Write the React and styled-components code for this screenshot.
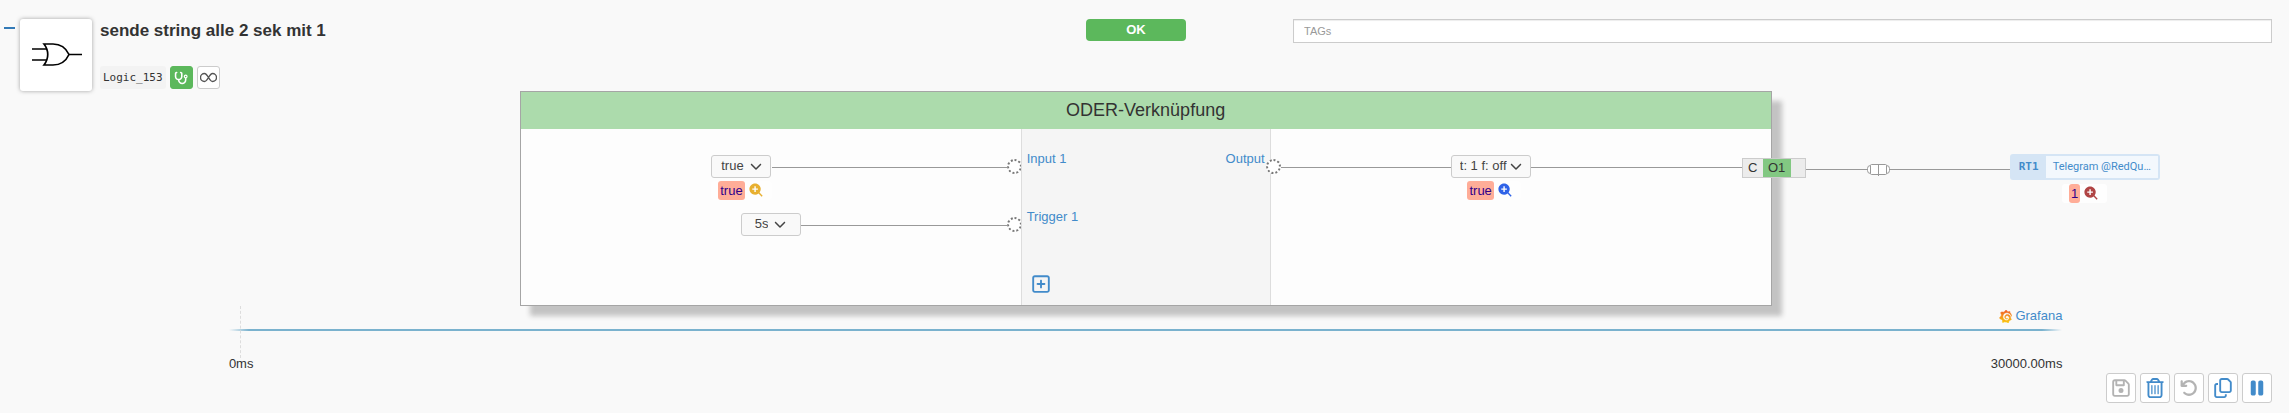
import styled, { createGlobalStyle } from 'styled-components'
import {
  FaStethoscope,
  FaChevronDown,
  FaRegSquarePlus,
  FaRegFloppyDisk,
  FaRegTrashCan,
  FaArrowRotateLeft,
  FaRegCopy,
  FaPause,
} from 'react-icons/fa6'
import { BiSolidZoomIn } from 'react-icons/bi'
import { SiGrafana } from 'react-icons/si'

const GlobalStyle = createGlobalStyle`
  * {
    box-sizing: border-box;
  }
  body {
    margin: 0;
    background: #f9f9f9;
    color: #333;
    font-family: "Liberation Sans", Arial, sans-serif;
    font-size: 13px;
    line-height: 18px;
  }
  button, input, select {
    font: inherit;
    color: inherit;
    margin: 0;
    padding: 0;
  }
  svg {
    display: block;
  }
`

const Page = styled.main`
  padding: 19px 0 10px;
  overflow: hidden;
`

// ---- header ----

const Header = styled.header`
  display: grid;
  grid-template-columns: 1fr 100px 1fr;
  column-gap: 107px;
  align-items: start;
  padding-right: 17px;
`

const Identity = styled.div`
  display: flex;
  align-items: flex-start;
  padding-left: 4px;
`

const Collapse = styled.button`
  width: 11px;
  height: 18px;
  margin-right: 5px;
  border: 0;
  background: none;

  &::before {
    content: '';
    display: block;
    height: 2px;
    background: #337ab7;
  }
`

const GateBox = styled.div`
  width: 72px;
  height: 72px;
  margin-right: 8px;
  background: #fff;
  border-radius: 3px;
  box-shadow: 0 0 4px rgba(0, 0, 0, 0.35);
`

const Heading = styled.div`
  display: flex;
  flex-direction: column;
  justify-content: space-between;
  height: 70px;
`

const Title = styled.h1`
  margin: 0;
  font-size: 17px;
  line-height: 23px;
  font-weight: bold;
`

const Meta = styled.div`
  display: flex;
  gap: 4px;
`

const LogicId = styled.code`
  padding: 0 3px;
  border-radius: 3px;
  background: #f3f3f3;
  font-family: "DejaVu Sans Mono", monospace;
  font-size: 11px;
  line-height: 23px;
`

const SmallButton = styled.button`
  display: flex;
  align-items: center;
  justify-content: center;
  width: 23px;
  height: 23px;
  border: 1px solid ${({ $active }) => ($active ? '#5cb85c' : '#ccc')};
  border-radius: 3px;
  background: ${({ $active }) => ($active ? '#5cb85c' : '#fff')};
  color: ${({ $active }) => ($active ? '#fff' : '#555')};
`

const OkButton = styled.button`
  height: 22px;
  border: 0;
  border-radius: 4px;
  background: #5cb85c;
  color: #fff;
  font-weight: bold;
`

const TagInput = styled.input`
  width: 100%;
  height: 24px;
  padding: 0 10px;
  border: 1px solid #ccc;
  background: #fff;
  box-shadow: inset 0 1px 1px rgba(0, 0, 0, 0.075);
  font-size: 11px;

  &::placeholder {
    color: #999;
    opacity: 1;
  }
`

// ---- logic block ----

const Workspace = styled.section`
  display: grid;
  grid-template-columns: 22.7% 54.7% 1fr;
`

const Card = styled.div`
  grid-column: 2;
  border: 1px solid #a5a5a5;
  background: #fdfdfd;
  box-shadow: 10px 10px 5px #c3c3c3;
`

const CardTitle = styled.h2`
  margin: 0;
  padding: 0 12px;
  background: #acdbac;
  font-size: 18px;
  font-weight: normal;
  line-height: 37px;
  text-align: center;
`

const CardBody = styled.div`
  display: grid;
  grid-template-columns: 2fr 1fr 2fr;
  min-height: 176px;
`

const Inputs = styled.div`
  display: flex;
  flex-direction: column;
  gap: 13px;
  padding-top: 26px;
`

const Outputs = styled.div`
  padding-top: 26px;
`

const Line = styled.div`
  display: flex;
  align-items: flex-start;
  justify-content: flex-end;
  margin-right: -1px;
`

const OutputLine = styled(Line)`
  justify-content: flex-start;
  margin: 0 -35px 0 -5px;
`

const Wire = styled.div`
  flex: ${({ $length }) => ($length ? `0 1 ${$length}px` : '1')};
  height: 1px;
  margin-top: ${({ $outer }) => ($outer ? '15px' : '12px')};
  background: #999;
`

const Port = styled.div`
  flex: none;
  width: 15px;
  height: 15px;
  margin-top: 4px;
  border: 2px dotted #777;
  border-radius: 50%;
  background: #fff;
`

const Node = styled.div`
  display: flex;
  flex-direction: column;
  align-items: center;
  gap: 3px;
`

const Dropdown = styled.label`
  display: flex;
  align-items: center;
  justify-content: center;
  gap: ${({ $wide }) => ($wide ? '3px' : '6px')};
  width: ${({ $wide }) => ($wide ? '80px' : '60px')};
  height: 23px;
  padding-bottom: 1px;
  border: 1px solid #ccc;
  border-radius: 3px;
  background: #f9f9f9;
  color: #444;
`

const Select = styled.select`
  appearance: none;
  field-sizing: content;
  border: 0;
  background: none;
`

const Value = styled.div`
  display: flex;
  align-items: center;
  justify-content: center;
  gap: 3px;
  height: 19px;
  padding: 0 7px;
  border-radius: 3px;
  background: #fefefe;
  color: ${({ $color }) => $color};
`

const ValueText = styled.span`
  padding: 0 2px;
  border-radius: 3px;
  background: #ffad98;
  color: #30008a;
  line-height: 19px;
`

const Names = styled.div`
  display: flex;
  justify-content: space-between;
  padding: 21px 5px 11px;
  border: solid #ddd;
  border-width: 0 1px;
  background: #f5f5f5;
`

const NameList = styled.div`
  display: flex;
  flex-direction: column;
  align-items: flex-start;
  gap: 40px;
`

const PortLink = styled.a`
  color: #428bca;
  text-decoration: none;
`

const AddButton = styled.button`
  margin: auto 0 0 4px;
  border: 0;
  background: none;
  color: #428bca;
`

const Connector = styled.div`
  display: flex;
  width: 64px;
  height: 20px;
  margin-top: 3px;
  border: 1px solid #ccc;
  background: #ececec;
  z-index: 1;
`

const ConnectorCell = styled.span`
  width: ${({ $on }) => ($on ? '28px' : '20px')};
  background: ${({ $on }) => ($on ? '#82c882' : 'transparent')};
  text-align: center;
`

const Target = styled.div`
  display: flex;
  align-items: flex-start;
  padding: 63px 0 0 34px;
`

const Coupler = styled.svg`
  flex: none;
  margin-top: 10px;
`

const TargetNode = styled(Node)`
  gap: 4px;
`

const Chip = styled.a`
  display: flex;
  width: 150px;
  height: 26px;
  padding: 2px;
  border-radius: 3px;
  background: #d5e5f5;
  color: #428bca;
  font-family: Roboto, sans-serif;
  font-size: 11px;
  line-height: 22px;
  text-decoration: none;
`

const ChipId = styled.strong`
  width: 34px;
  font-family: "DejaVu Sans Mono", monospace;
  text-align: center;
`

const ChipName = styled.span`
  flex: 1;
  padding-left: 7px;
  background: #f3f8fd;
  white-space: nowrap;
`

// ---- timeline ----

const Timeline = styled.section`
  position: relative;
  margin: 0 9.9% 0 10%;

  &::before {
    content: '';
    position: absolute;
    left: 11px;
    height: 52px;
    border-left: 1px dashed #ddd;
  }
`

const GrafanaLink = styled.a`
  display: flex;
  align-items: center;
  justify-content: flex-end;
  gap: 3px;
  height: 23px;
  padding-bottom: 3px;
  color: #428bca;
  text-decoration: none;
`

const GradientDefs = styled.svg`
  position: absolute;
`

const Track = styled.div`
  height: 2px;
  background: linear-gradient(to right, transparent, #7ab2ce 20px, #7ab2ce calc(100% - 20px), transparent);
`

const Ticks = styled.div`
  display: flex;
  justify-content: space-between;
  margin-top: 24px;
`

const Actions = styled.footer`
  display: flex;
  justify-content: flex-end;
  gap: 4px;
  padding-right: 17px;
`

const ActionButton = styled.button`
  display: flex;
  align-items: center;
  justify-content: center;
  width: 30px;
  height: 30px;
  border: 1px solid #ccc;
  border-radius: 3px;
  background: #fff;
  color: #428bca;

  &:disabled {
    color: #b3b3b3;
  }
`

function OrGate() {
  return (
    <svg width="72" height="72" viewBox="0 0 72 72" fill="none" stroke="#000" strokeWidth="1.7">
      <path d="M12 30h15M12 41h15M49 35.5h13" />
      <path d="M24 25h9c7 0 13 4 16 10.5c-3 6.5-9 10.5-16 10.5h-9c5-6.5 5-14.5 0-21z" />
    </svg>
  )
}

function InfinityIcon() {
  return (
    <svg width="17" height="11" viewBox="0 0 17 11" fill="none" stroke="currentColor" strokeWidth="1.4">
      <path d="M8.5 5.5C7 3 6 1.5 4.5 1.5a4 4 0 0 0 0 8C6 9.5 7 8 8.5 5.5S11 1.5 12.5 1.5a4 4 0 0 1 0 8C11 9.5 10 8 8.5 5.5z" />
    </svg>
  )
}

function Picker({ label, value, wide }) {
  return (
    <Dropdown $wide={wide}>
      <Select aria-label={label} defaultValue={value}>
        <option>{value}</option>
      </Select>
      <FaChevronDown size={12} />
    </Dropdown>
  )
}

function LiveValue({ value, color }) {
  return (
    <Value $color={color}>
      <ValueText>{value}</ValueText>
      <BiSolidZoomIn size={17} />
    </Value>
  )
}

export default function App() {
  return (
    <Page>
      <GlobalStyle />
      <Header>
        <Identity>
          <Collapse aria-label="Einklappen" />
          <GateBox>
            <OrGate />
          </GateBox>
          <Heading>
            <Title>sende string alle 2 sek mit 1</Title>
            <Meta>
              <LogicId>Logic_153</LogicId>
              <SmallButton $active aria-label="Diagnose">
                <FaStethoscope size={14} />
              </SmallButton>
              <SmallButton aria-label="Endlos">
                <InfinityIcon />
              </SmallButton>
            </Meta>
          </Heading>
        </Identity>
        <OkButton>OK</OkButton>
        <TagInput placeholder="TAGs" aria-label="TAGs" />
      </Header>

      <Workspace>
        <Card>
          <CardTitle>ODER-Verknüpfung</CardTitle>
          <CardBody>
            <Inputs>
              <Line>
                <Node>
                  <Picker label="Input 1" value="true" />
                  <LiveValue value="true" color="#e8b030" />
                </Node>
                <Wire $length={235} />
                <Port />
              </Line>
              <Line>
                <Node>
                  <Picker label="Trigger 1" value="5s" />
                </Node>
                <Wire $length={206} />
                <Port />
              </Line>
            </Inputs>
            <Names>
              <NameList>
                <PortLink href="#input">Input 1</PortLink>
                <PortLink href="#trigger">Trigger 1</PortLink>
                <AddButton aria-label="Hinzufügen">
                  <FaRegSquarePlus size={20} />
                </AddButton>
              </NameList>
              <NameList>
                <PortLink href="#output">Output</PortLink>
              </NameList>
            </Names>
            <Outputs>
              <OutputLine>
                <Port />
                <Wire $length={170} />
                <Node>
                  <Picker label="Output" value="t: 1 f: off" wide />
                  <LiveValue value="true" color="#2f63e8" />
                </Node>
                <Wire />
                <Connector>
                  <ConnectorCell>C</ConnectorCell>
                  <ConnectorCell $on>O1</ConnectorCell>
                </Connector>
              </OutputLine>
            </Outputs>
          </CardBody>
        </Card>
        <Target>
          <Wire $outer $length={61} />
          <Coupler width="23" height="12" viewBox="0 0 23 12" fill="#fff" stroke="#999">
            <rect x="0.5" y="1.5" width="22" height="8" rx="3" />
            <rect x="3.5" y="0.5" width="16" height="10" rx="1" />
            <path d="M11.5 0v12" />
          </Coupler>
          <Wire $outer $length={120} />
          <TargetNode>
            <Chip href="#rt1">
              <ChipId>RT1</ChipId>
              <ChipName>Telegram @RedQu…</ChipName>
            </Chip>
            <LiveValue value="1" color="#b04444" />
          </TargetNode>
        </Target>
      </Workspace>

      <Timeline>
        <GradientDefs width="0" height="0">
          <linearGradient id="grafana" x1="0" y1="0" x2="0" y2="1">
            <stop offset="0" stopColor="#f05a28" />
            <stop offset="1" stopColor="#fbca0a" />
          </linearGradient>
        </GradientDefs>
        <GrafanaLink href="#grafana">
          <SiGrafana size={13} fill="url(#grafana)" stroke="url(#grafana)" strokeWidth="1" />
          Grafana
        </GrafanaLink>
        <Track />
        <Ticks>
          <span>0ms</span>
          <span>30000.00ms</span>
        </Ticks>
      </Timeline>

      <Actions>
        <ActionButton disabled aria-label="Speichern">
          <FaRegFloppyDisk size={20} />
        </ActionButton>
        <ActionButton aria-label="Löschen">
          <FaRegTrashCan size={20} />
        </ActionButton>
        <ActionButton disabled aria-label="Rückgängig">
          <FaArrowRotateLeft size={18} />
        </ActionButton>
        <ActionButton aria-label="Kopieren">
          <FaRegCopy size={20} />
        </ActionButton>
        <ActionButton aria-label="Pause">
          <FaPause size={20} />
        </ActionButton>
      </Actions>
    </Page>
  )
}
